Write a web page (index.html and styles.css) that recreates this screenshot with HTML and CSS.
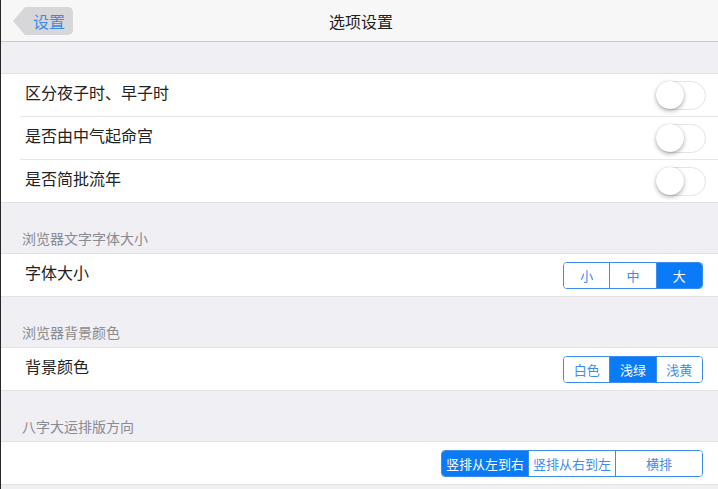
FILE: index.html
```html
<!DOCTYPE html>
<html lang="zh-CN">
<head>
    <meta charset="UTF-8">
    <title>选项设置</title>
    <link rel="stylesheet" href="styles.css">
</head>
<body>
    <div class="navbar">
        <div class="nav-left">
            <a class="back-btn" href="#">设置</a>
        </div>
        <div class="nav-title">选项设置</div>
        <div class="nav-right"></div>
    </div>

    <div class="content">
        <div class="group first">
            <div class="row">
                <span class="row-label">区分夜子时、早子时</span>
                <span class="toggle"><span class="knob"></span></span>
            </div>
            <div class="row">
                <span class="row-label">是否由中气起命宫</span>
                <span class="toggle"><span class="knob"></span></span>
            </div>
            <div class="row">
                <span class="row-label">是否简批流年</span>
                <span class="toggle"><span class="knob"></span></span>
            </div>
        </div>

        <div class="section-title">浏览器文字字体大小</div>
        <div class="group">
            <div class="row">
                <span class="row-label">字体大小</span>
                <div class="segment small-seg">
                    <span class="seg-item">小</span>
                    <span class="seg-item">中</span>
                    <span class="seg-item active">大</span>
                </div>
            </div>
        </div>

        <div class="section-title">浏览器背景颜色</div>
        <div class="group">
            <div class="row">
                <span class="row-label">背景颜色</span>
                <div class="segment small-seg">
                    <span class="seg-item">白色</span>
                    <span class="seg-item active">浅绿</span>
                    <span class="seg-item">浅黄</span>
                </div>
            </div>
        </div>

        <div class="section-title">八字大运排版方向</div>
        <div class="group">
            <div class="row">
                <span class="row-label"></span>
                <div class="segment wide-seg">
                    <span class="seg-item active">竖排从左到右</span>
                    <span class="seg-item">竖排从右到左</span>
                    <span class="seg-item">横排</span>
                </div>
            </div>
        </div>
    </div>
</body>
</html>
```

FILE: styles.css
```css
body {
    margin: 0;
    font-family: "Noto Sans CJK SC", "Liberation Sans", sans-serif;
    background-color: #efeff4;
    color: #222;
    border-left: 1px solid #2b2626;
    height: 489px;
    overflow: hidden;
}
.navbar {
    height: 41px;
    background: #f7f7f8;
    border-bottom: 1px solid #c9c9ce;
    display: grid;
    grid-template-columns: 1fr auto 1fr;
    align-items: center;
}
.nav-left {
    display: flex;
    padding-left: 24px;
}
.back-btn {
    position: relative;
    display: block;
    height: 28px;
    line-height: 28px;
    padding: 0 8px 0 8px;
    background: #d7d7d9;
    border-radius: 0 5px 5px 0;
    color: #3a8be4;
    font-size: 16px;
    text-decoration: none;
}
.back-btn::before {
    content: "";
    position: absolute;
    left: -12px;
    top: 0;
    border-style: solid;
    border-width: 14px 12px 14px 0;
    border-color: transparent #d7d7d9 transparent transparent;
}
.nav-title {
    font-size: 16px;
    color: #1e1e1e;
    margin-left: 3px;
}
.content {
    padding-top: 31px;
}
.group {
    background: #fff;
    border-top: 1px solid #e2e2e6;
    border-bottom: 1px solid #e2e2e6;
}
.row {
    height: 42px;
    display: flex;
    align-items: center;
    justify-content: space-between;
    padding: 0 15px 0 24px;
    position: relative;
}
.row + .row::before {
    content: "";
    position: absolute;
    left: 19px;
    right: 0;
    top: -1px;
    border-top: 1px solid #e6e6ea;
}
.row + .row {
    margin-top: 1px;
}
.row-label {
    font-size: 16px;
    line-height: 20px;
    padding-bottom: 6px;
    color: #222;
}
.section-title {
    padding: 26px 21px 6px;
    font-size: 14px;
    line-height: 18px;
    color: #8a8a8f;
}
.toggle {
    width: 48px;
    height: 27px;
    border: 1px solid #e4e4e6;
    border-radius: 15px;
    background: #fff;
    display: flex;
    margin-right: -3px;
}
.knob {
    width: 28px;
    height: 28px;
    margin: -1px 0 0 -1px;
    border-radius: 50%;
    background: #fff;
    box-shadow: 0 2px 4px rgba(0, 0, 0, 0.3), 0 0 1px rgba(0, 0, 0, 0.2);
}
.segment {
    display: flex;
    border: 1px solid #3d8cf0;
    border-radius: 4px;
    overflow: hidden;
    height: 25px;
}
.small-seg {
    width: 138px;
}
.wide-seg {
    width: 260px;
}
.seg-item {
    flex: 1;
    display: flex;
    align-items: center;
    justify-content: center;
    font-size: 13px;
    color: #3d8cf0;
    background: #fff;
}
.seg-item + .seg-item {
    border-left: 1px solid #3d8cf0;
}
.seg-item.active {
    background: #0a7bf6;
    color: #fff;
}
```
